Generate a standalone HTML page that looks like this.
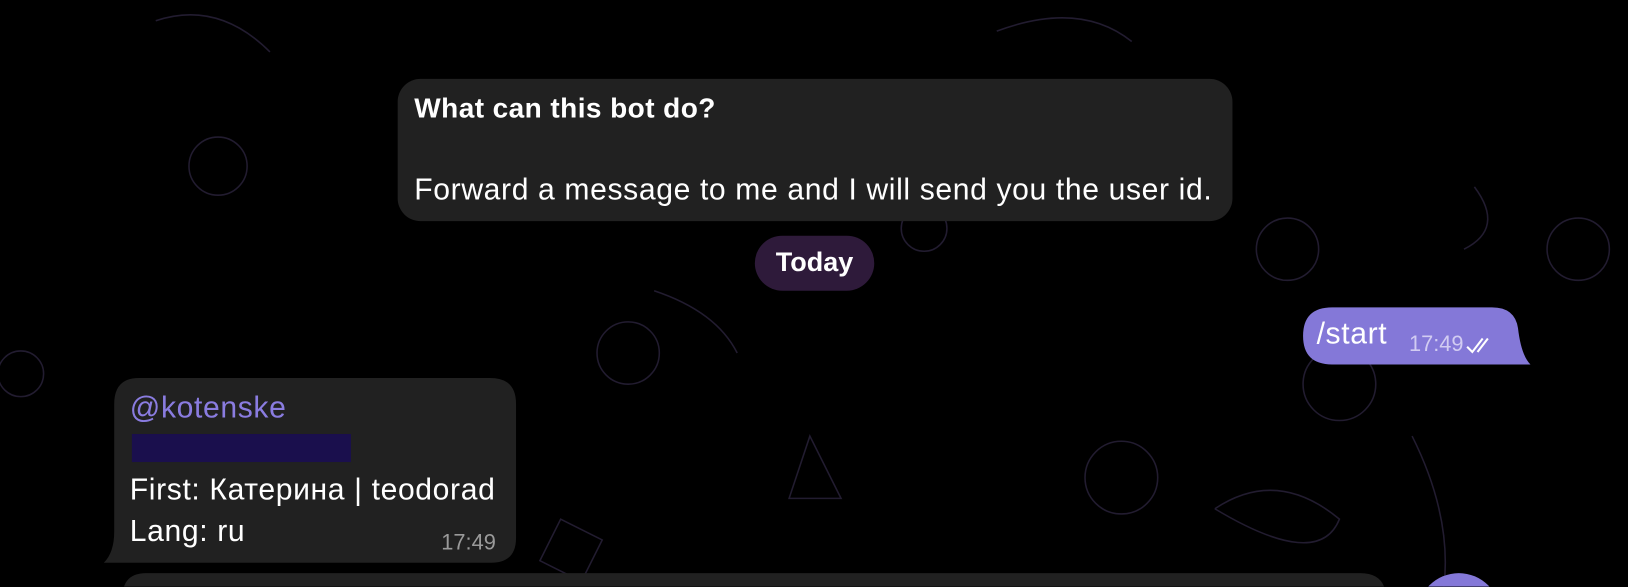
<!DOCTYPE html>
<html><head><meta charset="utf-8"><style>
html,body{margin:0;padding:0;width:1628px;height:586px;overflow:hidden;background:#000;font-family:"Liberation Sans","Noto Sans CJK SC",sans-serif;color:#fff}
#w{position:absolute;left:0;top:0;width:1568px;height:565px;transform:scale(1.0383);transform-origin:0 0;overflow:hidden}
.b{position:absolute;background:#212121;border-radius:22px}
.t{position:absolute;white-space:nowrap;font-size:29px;letter-spacing:0.6px}
</style></head><body><div id="w">
<svg width="1568" height="565" style="position:absolute;left:0;top:0" fill="none" stroke-width="1.5">
<g stroke="#221c30">
<circle cx="20" cy="360" r="22"/><circle cx="605" cy="340" r="30"/><circle cx="1520" cy="240" r="30"/><circle cx="1290" cy="370" r="35"/>
<circle cx="210" cy="160" r="28"/><circle cx="890" cy="220" r="22"/><circle cx="1080" cy="460" r="35"/><circle cx="1240" cy="240" r="30"/>
<path d="M1360 420 q40 80 30 150"/><path d="M150 20 q60 -20 110 30"/><path d="M960 30 q80 -30 130 10"/><path d="M1170 490 q60 -40 120 10 q-20 50 -120 -10"/>
<path d="M630 280 q60 20 80 60"/><path d="M780 420 l30 60 l-50 0 z"/><path d="M1420 180 q30 40 -10 60"/><path d="M540 500 l40 20 l-20 40 l-40 -20 z"/>
</g></svg>
<div class="b" style="left:383px;top:76px;width:804px;height:137px"></div>
<div class="t" style="left:399px;top:89px;font-weight:bold;font-size:27px;letter-spacing:0.4px">What can this bot do?</div>
<div class="t" style="left:399px;top:167px">Forward a message to me and I will send you the user id.</div>
<div style="position:absolute;left:727px;top:227px;width:115px;height:53px;border-radius:27px;background:#2e1a3a"></div>
<div class="t" style="left:727px;width:115px;text-align:center;top:237px;font-weight:bold;font-size:26px;letter-spacing:0">Today</div>
<svg width="1568" height="565" style="position:absolute;left:0;top:0">
<path d="M1283 296 H1437 q22 0 25 20 q3 26 12 35 H1283 q-28 0 -28 -27.5 q0 -27.5 28 -27.5z" fill="#8478d8"/>
<path d="M134 364 H472 q25 0 25 25 V518 q0 24 -24 24 H100 q10 -10 10 -30 V389 q0 -25 24 -25z" fill="#212121"/>
<path d="M141 552 H1310 q25 0 25 25 V600 H118 V575 q0 -23 23 -23z" fill="#212121"/>
<circle cx="1405" cy="592" r="40" fill="#8478d8"/>
<path d="M1413 334 l5 5 l10 -13 M1423 339 l10 -13" stroke="#fff" stroke-width="2" fill="none"/>
</svg>
<div class="t" style="left:1268px;top:306px">/start</div>
<div class="t" style="left:1357px;top:320px;font-size:21px;letter-spacing:0;color:#d2ccf2">17:49</div>
<div class="t" style="left:125px;top:377px;color:#8a7ce0">@kotenske</div>
<div style="position:absolute;left:127px;top:418px;width:211px;height:27px;background:#1a0f4d"></div>
<div class="t" style="left:125px;top:456px">First: Катерина | teodorad</div>
<div class="t" style="left:125px;top:496px">Lang: ru</div>
<div class="t" style="left:425px;top:511px;font-size:21px;letter-spacing:0;color:#9a9a9a">17:49</div>
</div></body></html>
